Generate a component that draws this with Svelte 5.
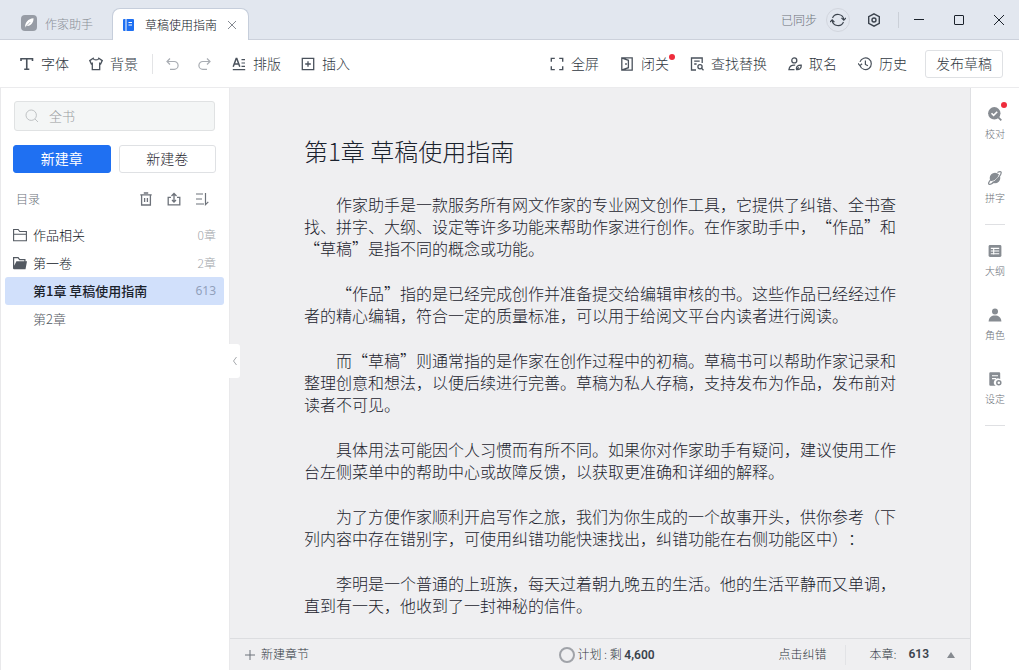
<script lang="ts">
  type Chapter = { id: number, title: string, words?: number }
  type Volume = { name: string, count: number, open: boolean, chapters: Chapter[] }

  let query = $state('')
  let activeChapter = $state(1)
  let sidebarOpen = $state(true)

  let volumes: Volume[] = $state([
    { name: '作品相关', count: 0, open: false, chapters: [] },
    {
      name: '第一卷',
      count: 2,
      open: true,
      chapters: [
        { id: 1, title: '第1章 草稿使用指南', words: 613 },
        { id: 2, title: '第2章' }
      ]
    }
  ])

  const paragraphs = [
    '作家助手是一款服务所有网文作家的专业网文创作工具，它提供了纠错、全书查找、拼字、大纲、设定等许多功能来帮助作家进行创作。在作家助手中，“作品”和“草稿”是指不同的概念或功能。',
    '“作品”指的是已经完成创作并准备提交给编辑审核的书。这些作品已经经过作者的精心编辑，符合一定的质量标准，可以用于给阅文平台内读者进行阅读。',
    '而“草稿”则通常指的是作家在创作过程中的初稿。草稿书可以帮助作家记录和整理创意和想法，以便后续进行完善。草稿为私人存稿，支持发布为作品，发布前对读者不可见。',
    '具体用法可能因个人习惯而有所不同。如果你对作家助手有疑问，建议使用工作台左侧菜单中的帮助中心或故障反馈，以获取更准确和详细的解释。',
    '为了方便作家顺利开启写作之旅，我们为你生成的一个故事开头，供你参考（下列内容中存在错别字，可使用纠错功能快速找出，纠错功能在右侧功能区中）：',
    '李明是一个普通的上班族，每天过着朝九晚五的生活。他的生活平静而又单调，直到有一天，他收到了一封神秘的信件。'
  ]

  const railGroups = [
    [{ icon: 'proof', label: '校对', dot: true }, { icon: 'planet', label: '拼字' }],
    [{ icon: 'outline', label: '大纲' }, { icon: 'role', label: '角色' }, { icon: 'setting', label: '设定' }]
  ] as Array<Array<{ icon: string, label: string, dot?: boolean }>>
</script>

{#snippet icon(name: string, size = 14)}
  <svg class="icon" width={size} height={size} viewBox="0 0 14 14" aria-hidden="true">
    {#if name === 'font'}
      <path d="M1 4V1.7h11.500V4M6.750 1.700v10.600M4.200 12.300h5.100" stroke-width="1.6" />
    {:else if name === 'shirt'}
      <path d="M4.2 1.3.8 3.600l1.500 3.200 1-.5v6.300h7.400V6.300l1 .5 1.500-3.200L9.800 1.300C9.200 3.500 4.800 3.500 4.2 1.300Z" stroke-width="1.3" />
    {:else if name === 'undo'}
      <path d="M4 1.500 1 4.500l3 3M1.300 4.500h6.900a3.900 3.900 0 0 1 0 7.800H4" stroke-width="1.2" />
    {:else if name === 'redo'}
      <path d="m9 1.500 3 3-3 3M11.700 4.500H4.800a3.900 3.900 0 0 0 0 7.800H9" stroke-width="1.2" />
    {:else if name === 'layout'}
      <path d="m1.200 9.800 3-8.300h.6l3 8.300M2.300 7h4.400" stroke-width="1.500" />
      <path d="M.8 12.600h12.400M9.500 2.600H13M9.500 6H13M9.500 9.300H13" stroke-width="1.200" />
    {:else if name === 'insert'}
      <path d="M1.300 1.300h11.400v11.400H1.300ZM7 4.200v5.600M4.200 7h5.600" stroke-width="1.3" />
    {:else if name === 'full'}
      <path d="M1.300 4.800V1.400h3.500M9.200 1.400h3.500v3.400M12.700 9.200v3.400H9.200M4.800 12.600H1.300V9.200" stroke-width="1.4" />
    {:else if name === 'door'}
      <path d="M1.800.8h10.400v12.400H1.800ZM2.200 1.200 8.400 3.300v7.400L2.200 12.800M6 6v2" stroke-width="1.3" />
    {:else if name === 'find'}
      <path d="M12.200 6V1H1.500v12H6M4.200 4.200h5.500M4.200 7h2.400" stroke-width="1.3" />
      <circle cx="10" cy="9.800" r="2.100" stroke-width="1.3" />
      <path d="m11.500 11.300 2 2" stroke-width="1.3" />
    {:else if name === 'name'}
      <circle cx="6.300" cy="3.400" r="2.500" stroke-width="1.3" />
      <path d="M7.200 8.200C4 7.800 1.300 9 .9 12.700h5.600M8.600 12.600c-.8-2.900 1.200-4.600 4.600-4.400.2 3-1.400 4.700-4.600 4.400Zm0 0 2.200-2.200" stroke-width="1.3" />
    {:else if name === 'history'}
      <path d="M2 8.600A5.800 5.800 0 1 0 2 4.900M0 6.300l1.900 2.400 2.200-2M7.400 3.600v3.800l2.500 1.400" stroke-width="1.2" />
    {:else if name === 'search'}
      <circle cx="6.2" cy="6.2" r="5.2" />
      <path d="m10 10 3 3" />
    {:else if name === 'trash'}
      <path d="M1.300 2.800h11.400M4.800 1h4.400M2.600 3v10h8.800V3M5.600 6v4M8.400 6v4" stroke-width="1.3" />
    {:else if name === 'export'}
      <path d="M4 5.400H1.2v7.400h11.600V5.400H10M7 9.500V1.600M4.500 4 7 1.500 9.500 4M5 8l2 2 2-2" stroke-width="1.3" />
    {:else if name === 'sort'}
      <path d="M1 2h7M1 7h6M1 12h8M10.500 1v11.600l2.800-2.800" stroke-width="1.2" />
    {:else if name === 'sync'}
      <path d="M2.200 5.200a5.200 5.200 0 0 1 9.900 1.500M11.800 8.800a5.200 5.200 0 0 1-9.900-1.500M0 8.800l1.900-2 2 2M10 5.200l2.100 2 1.900-2" />
    {:else if name === 'gear'}
      <path d="M7 .8 12.300 3.700v6.600L7 13.200 1.700 10.300V3.700Z" stroke-width="1.4" />
      <circle cx="7" cy="7" r="2" stroke-width="1.4" />
    {:else if name === 'folder'}
      <path d="M.6 12.700V1.500h4.600l1.500 2h6.700v9.200ZM.6 6.200h12.800" stroke-width="1.100" />
    {:else if name === 'folder-open'}
      <path class="solid" d="M0 12.500V1h5.400l1.500 2h5.600v2.200H14l-1.500 8H.8Z" />
      <path class="cut" d="M1.200 9.800V2.300h3.600l1.500 2h5v1H3.400Z" />
    {:else if name === 'proof'}
      <circle class="solid" cx="6.3" cy="6.3" r="6.200" />
      <path class="line" d="m3.500 6.200 2.100 2.100 3.600-3.600" stroke-width="1.6" />
      <path d="m10.300 10.300 3 3" stroke-width="1.8" />
    {:else if name === 'planet'}
      <circle class="solid" cx="7" cy="7" r="5.300" />
      <path class="line" d="M3 10.700C7 10.300 10.200 7.200 11.300 3.600" stroke-width="1" />
      <path d="M2.500 8.800C.6 11.200.1 12.900 1.100 13.300c2.800.7 11.700-7.500 12.100-11.500.1-1.400-1.600-1.400-3.800-.3" stroke-width="1.2" />
    {:else if name === 'outline'}
      <rect class="solid" x="0.6" y="1" width="12.8" height="12" rx="1.4" />
      <path class="line" d="M2.800 4.400h8.400M2.800 7h8.400M2.800 9.800h8.400M5.700 3.700v6.800" stroke-width="1.1" />
    {:else if name === 'role'}
      <circle class="solid" cx="7" cy="3.500" r="3" />
      <path class="solid" d="M.6 13.400c.3-3.800 2.800-5.800 6.400-5.800s6.100 2 6.400 5.800Z" />
    {:else if name === 'setting'}
      <path class="solid" d="M2.300.2h8.900a1 1 0 0 1 1 1V7a4 4 0 0 0-4.400 6.800H2.300a1 1 0 0 1-1-1V1.200a1 1 0 0 1 1-1Z" />
      <path class="line" d="M4 3.800h6M4 6.600h4" stroke-width="1.100" />
      <circle cx="10.800" cy="10.800" r="2" stroke-width="1.500" />
    {/if}
  </svg>
{/snippet}

{#snippet tool(name: string, label: string)}
  <button class="tool">
    {@render icon(name)}
    <span class="label">{label}</span>
  </button>
{/snippet}

<div class="app" lang="zh-CN">
  <header class="titlebar">
    <nav class="tabs">
      <button class="tab home">
        <svg width="16" height="16" viewBox="0 0 16 16" aria-hidden="true">
          <rect width="16" height="16" rx="4" fill="#979ca5" />
          <path d="M4 12.500C4 7.500 7 3.500 12.500 3.200c.2 4.300-2.500 7.600-7 7.900L4 12.500Z" fill="#fff" />
          <path d="m4.500 12 4.800-5" stroke="#979ca5" stroke-width=".7" />
        </svg>
        <span>作家助手</span>
      </button>
      <div class="tab current">
        <svg width="12" height="12" viewBox="0 0 12 12" aria-hidden="true">
          <path d="M1 0h1.500v12H1a1 1 0 0 1-1-1V1a1 1 0 0 1 1-1Z" fill="#1f70f2" />
          <path d="M3.500 0H10a1 1 0 0 1 1 1v10a1 1 0 0 1-1 1H3.500Z" fill="#1f70f2" />
          <path d="M5.500 3.500h3.500M5.500 6h3.500" stroke="#fff" />
        </svg>
        <span>草稿使用指南</span>
        <button class="tab-close" aria-label="关闭标签">
          <svg width="10" height="10" viewBox="0 0 10 10"><path d="m1 1 8 8M9 1 1 9" /></svg>
        </button>
      </div>
    </nav>
    <div class="status">
      <span>已同步</span>
      <button class="sync" aria-label="同步">{@render icon('sync', 16)}</button>
      <button class="gear" aria-label="设置">{@render icon('gear')}</button>
    </div>
    <div class="window-buttons">
      <button aria-label="最小化"><svg width="12" height="12" viewBox="0 0 12 12"><path d="M1 5.500h10" /></svg></button>
      <button aria-label="最大化"><svg width="12" height="12" viewBox="0 0 12 12"><rect x="1.500" y="1.500" width="9" height="9" rx=".5" /></svg></button>
      <button aria-label="关闭"><svg width="12" height="12" viewBox="0 0 12 12"><path d="m1 1 10 10M11 1 1 11" /></svg></button>
    </div>
  </header>

  <div class="toolbar">
    <div class="tools left">
      {@render tool('font', '字体')}
      {@render tool('shirt', '背景')}
      <div class="history-tools">
        <button class="tool muted" aria-label="撤销">{@render icon('undo')}</button>
        <button class="tool muted" aria-label="重做">{@render icon('redo')}</button>
      </div>
      {@render tool('layout', '排版')}
      {@render tool('insert', '插入')}
    </div>
    <div class="tools right">
      {@render tool('full', '全屏')}
      <div class="with-dot">
        {@render tool('door', '闭关')}
        <i class="dot"></i>
      </div>
      {@render tool('find', '查找替换')}
      {@render tool('name', '取名')}
      {@render tool('history', '历史')}
    </div>
    <button class="publish"><span class="label">发布草稿</span></button>
  </div>

  <div class="workspace">
    {#if sidebarOpen}
      <aside class="sidebar">
        <label class="search">
          {@render icon('search')}
          <input type="text" placeholder="全书" aria-label="搜索全书" bind:value={query} />
        </label>
        <div class="create">
          <button class="primary"><span class="label">新建章</span></button>
          <button><span class="label">新建卷</span></button>
        </div>
        <div class="catalog-head">
          <span class="label">目录</span>
          <button aria-label="回收站">{@render icon('trash')}</button>
          <button aria-label="导出">{@render icon('export')}</button>
          <button aria-label="排序">{@render icon('sort')}</button>
        </div>
        <div class="catalog">
          {#each volumes as volume}
            <button class="row" onclick={() => (volume.open = !volume.open)}>
              {@render icon(volume.open ? 'folder-open' : 'folder')}
              <span class="name label">{volume.name}</span>
              <span class="count label">{volume.count}章</span>
            </button>
            {#if volume.open}
              {#each volume.chapters as chapter (chapter.id)}
                <button
                  class="row chapter"
                  class:active={chapter.id === activeChapter}
                  onclick={() => (activeChapter = chapter.id)}
                >
                  <span class="name label">{chapter.title}</span>
                  {#if chapter.words}
                    <span class="count label">{chapter.words}</span>
                  {/if}
                </button>
              {/each}
            {/if}
          {/each}
        </div>
      </aside>
    {/if}

    <main class="editor">
      <button class="collapse" aria-label="收起目录" onclick={() => (sidebarOpen = !sidebarOpen)}>
        <svg width="6" height="10" viewBox="0 0 6 10"><path d="M4.500 1 1.500 5l3 4" /></svg>
      </button>
      <article>
        <h1>第1章 草稿使用指南</h1>
        {#each paragraphs as text}
          <p>{text}</p>
        {/each}
      </article>
      <footer>
        <button class="add">
          <svg width="10" height="10" viewBox="0 0 10 10"><path d="M5 0v10M0 5h10" /></svg>
          <span class="label">新建章节</span>
        </button>
        <button class="plan">
          <i class="ring"></i>
          <span class="label">计划 : 剩 <b>4,600</b></span>
        </button>
        <div class="foot-right">
          <button><span class="label">点击纠错</span></button>
          <button class="words">
            <span class="label">本章:</span>
            <b class="label">613</b>
            <i class="caret"></i>
          </button>
        </div>
      </footer>
    </main>

    <nav class="rail">
      {#each railGroups as group}
        <div class="rail-group">
          {#each group as item}
            <button>
              {@render icon(item.icon)}
              <span>{item.label}</span>
              {#if item.dot}
                <i class="dot"></i>
              {/if}
            </button>
          {/each}
        </div>
      {/each}
    </nav>
  </div>
</div>

<style>
  :global(body) {
    margin: 0;
  }

  .app {
    display: flex;
    flex-direction: column;
    height: 100vh;
    overflow: hidden;
    font-family: "Noto Sans CJK SC", sans-serif;
    font-size: 14px;
    font-weight: 300;
    color: #2f3741;
    background: #fff;
  }

  .app * {
    box-sizing: border-box;
  }

  button {
    display: flex;
    align-items: center;
    justify-content: center;
    padding: 0;
    border: none;
    background: none;
    font: inherit;
    color: inherit;
    white-space: nowrap;
    cursor: pointer;
  }

  svg {
    display: block;
    flex-shrink: 0;
    fill: none;
    stroke: currentColor;
  }

  .tab > svg {
    stroke: none;
  }

  .solid {
    fill: currentColor;
    stroke: none;
  }

  .cut {
    fill: #fff;
    stroke: none;
  }

  .line {
    stroke: #fff;
  }

  /* CJK glyphs sit low in their line box */
  .label {
    padding-bottom: 2px;
  }

  .dot {
    position: absolute;
    width: 6px;
    height: 6px;
    border-radius: 50%;
    background: #ee2c3c;
  }

  .titlebar {
    display: flex;
    flex-shrink: 0;
    height: 40px;
    background: #e2e7ef;
    border-bottom: 1px solid #ccd1db;
    font-size: 12px;
  }

  .tabs {
    display: flex;
    align-items: flex-end;
    flex: 1;
    padding-left: 21px;
  }

  .tab {
    display: flex;
    align-items: center;
    height: 32px;
  }

  .home {
    gap: 8px;
    margin-right: 19px;
    color: #8b9098;
  }

  .current {
    gap: 10px;
    margin-bottom: -1px;
    padding: 0 11px 0 10px;
    border: 1px solid #c6cedb;
    border-bottom: none;
    border-radius: 8px 8px 0 0;
    background: #fff;
    color: #10161e;
  }

  .tab-close {
    color: #858a92;
  }

  .status {
    display: flex;
    align-items: center;
    color: #6d727a;
  }

  .sync {
    width: 24px;
    height: 24px;
    margin: 0 17px 0 9px;
    border: 1px solid #d2d6de;
    border-radius: 50%;
    color: #3b434d;
  }

  .gear {
    margin-right: 17px;
    color: #3b434d;
  }

  .window-buttons {
    display: flex;
    align-items: center;
    color: #1b222b;
  }

  .window-buttons::before {
    content: "";
    width: 1px;
    height: 16px;
    background: #cbd0d8;
  }

  .window-buttons button {
    width: 40px;
    height: 39px;
  }

  .toolbar {
    display: flex;
    align-items: center;
    flex-shrink: 0;
    height: 48px;
    padding: 0 16px 0 20px;
    border-bottom: 1px solid #ebebed;
    background: #fff;
  }

  .tools {
    display: flex;
    align-items: center;
    gap: 20px;
  }

  .left {
    flex: 1;
  }

  .right {
    gap: 21px;
    margin-right: 18px;
  }

  .tool {
    gap: 7px;
    line-height: 20px;
  }

  .tool .icon {
    color: #4a525c;
  }

  .muted .icon {
    color: #a9adb3;
  }

  .history-tools {
    display: flex;
    align-items: center;
    gap: 18px;
    margin-left: -6px;
  }

  .history-tools::before {
    content: "";
    width: 1px;
    height: 20px;
    margin-right: -5px;
    background: #e3e4e6;
  }

  .with-dot {
    position: relative;
  }

  .with-dot .dot {
    top: 1px;
    right: -6px;
  }

  .publish {
    height: 28px;
    padding: 0 10px;
    border: 1px solid #dfe1e4;
    border-radius: 3px;
  }

  .workspace {
    display: flex;
    flex: 1;
    min-height: 0;
  }

  .sidebar {
    display: flex;
    flex-direction: column;
    flex: 0 0 230px;
    padding-top: 13px;
    border-left: 1px solid #e9e9eb;
    border-right: 1px solid #e9e9eb;
  }

  .search {
    display: flex;
    align-items: center;
    gap: 10px;
    height: 30px;
    margin: 0 14px 0 13px;
    padding: 0 10px;
    border: 1px solid #e0e2e3;
    border-radius: 3px;
    background: #f4f6f6;
    color: #bfc2c4;
  }

  .search input {
    flex: 1;
    min-width: 0;
    padding: 0 0 2px;
    border: none;
    outline: none;
    background: none;
    font: inherit;
    font-size: 13px;
    color: #3b434d;
  }

  .search input::placeholder {
    color: #989ba0;
  }

  .create {
    display: grid;
    grid-template-columns: 1fr 1fr;
    gap: 8px;
    margin: 14px 13px 0 12px;
  }

  .create button {
    height: 28px;
    border: 1px solid #dfe1e4;
    border-radius: 3px;
    color: #1b222b;
  }

  .create .primary {
    border-color: #1f70f2;
    background: #1f70f2;
    font-weight: 400;
    color: #fff;
  }

  .catalog-head {
    display: flex;
    align-items: center;
    gap: 14px;
    height: 20px;
    margin: 16px 20px 12px 15px;
    font-size: 12px;
    color: #6d727a;
  }

  .catalog-head span {
    flex: 1;
  }

  .catalog {
    padding: 0 5px 0 4px;
  }

  .row {
    gap: 6px;
    width: 100%;
    height: 28px;
    padding: 0 8px;
    border-radius: 3px;
    font-size: 13px;
    color: #10161e;
  }

  .row .icon {
    color: #535961;
  }

  .name {
    flex: 1;
    text-align: left;
  }

  .count {
    font-size: 12px;
    color: #a2a6ab;
  }

  .chapter {
    padding-left: 28px;
    color: #535961;
  }

  .active {
    background: #d1e0fb;
    font-weight: 500;
    color: #1b222b;
  }

  .active .count {
    font-family: "Noto Sans", sans-serif;
    font-weight: 400;
    color: #91a0bb;
  }

  .editor {
    position: relative;
    display: flex;
    flex-direction: column;
    flex: 1;
    min-width: 0;
    background: #efeff1;
  }

  .collapse {
    position: absolute;
    top: 256px;
    left: -1px;
    width: 11px;
    height: 34px;
    border-radius: 0 3px 3px 0;
    background: #fff;
    color: #a6a9ad;
  }

  article {
    flex: 1;
    min-height: 0;
    padding: 47px 74px 0;
    overflow: hidden;
    text-spacing-trim: space-all;
    color: #1b232e;
  }

  h1 {
    margin: 0 0 26px;
    font-size: 24px;
    line-height: 32px;
    font-weight: 300;
  }

  p {
    margin: 0 0 23px;
    font-size: 16px;
    line-height: 22px;
    text-indent: 2em;
  }

  footer {
    display: grid;
    grid-template-columns: 1fr auto 1fr;
    align-items: center;
    flex-shrink: 0;
    height: 32px;
    padding: 0 15px;
    border-top: 1px solid #dcdde0;
    font-size: 12px;
  }

  footer b {
    font-family: Roboto, sans-serif;
    font-weight: 600;
    color: #3b434d;
  }

  .add {
    justify-self: start;
    gap: 6px;
  }

  .add svg {
    color: #6d727a;
  }

  .plan {
    gap: 2px;
    margin-left: 14px;
  }

  .ring {
    width: 16px;
    height: 16px;
    border: 2px solid #a0a3a9;
    border-radius: 50%;
  }

  .foot-right {
    display: flex;
    align-items: center;
    justify-self: end;
  }

  .words {
    gap: 12px;
    height: 20px;
    margin-left: 19px;
    padding-left: 23px;
    border-left: 1px solid #e2e3e6;
  }

  .caret {
    margin-left: 6px;
    border: 4px solid transparent;
    border-top: none;
    border-bottom: 6px solid #868a90;
  }

  .rail {
    flex: 0 0 49px;
    padding-top: 19px;
    border-left: 1px solid #dfe0e3;
  }

  .rail-group {
    display: flex;
    flex-direction: column;
    gap: 31px;
    width: 20px;
    margin: 0 auto 19px;
    padding-bottom: 20px;
    border-bottom: 1px solid #dfe0e3;
  }

  .rail button {
    position: relative;
    flex-direction: column;
    gap: 7px;
    font-size: 10px;
    line-height: 12px;
    color: #6d727a;
  }

  .rail .icon {
    color: #878c92;
  }

  .rail .dot {
    top: -5px;
    right: -2px;
  }
</style>
